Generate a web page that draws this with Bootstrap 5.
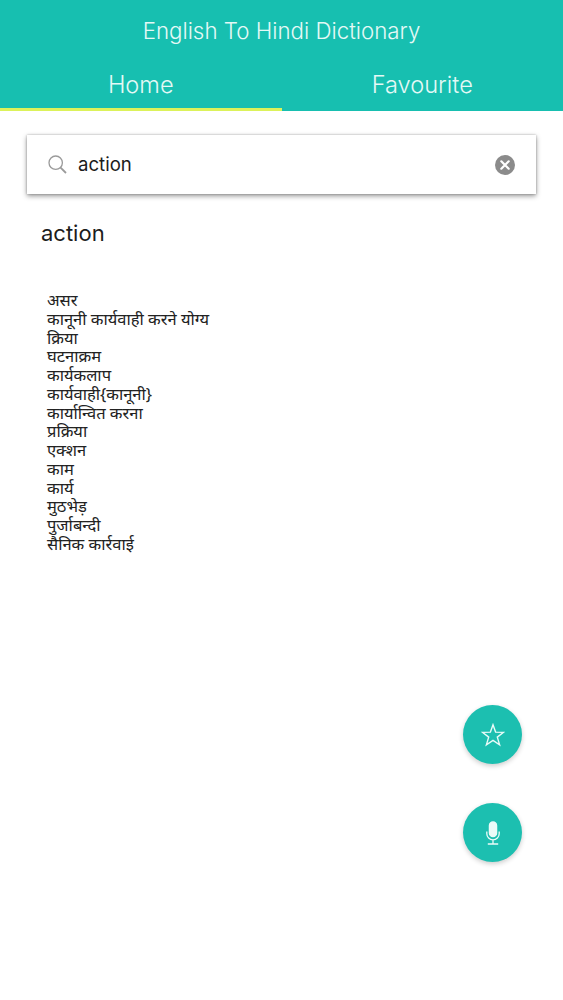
<!DOCTYPE html>
<html lang="hi">
<head>
<meta charset="utf-8">
<title>English To Hindi Dictionary</title>
<link href="https://cdn.jsdelivr.net/npm/bootstrap@5.3.0/dist/css/bootstrap.min.css" rel="stylesheet">
<style>
html,body{height:100%;}
body{background:#fff;color:#1c1c1c;font-family:"Inter","Liberation Sans","Noto Sans",sans-serif;overflow:hidden;}
.app-screen{position:relative;width:563px;height:1000px;}
.app-head{background:#17bfb0;color:#e4f9f6;height:111px;}
.app-title{font-size:22.3px;font-weight:300;line-height:28px;padding-top:17px;height:54px;}
.tab-item{flex:1 1 50%;height:57px;font-size:23.6px;font-weight:300;line-height:30px;padding:7px 0 0;color:#e4f9f6;background:none;border:0;border-bottom:3px solid transparent;}
.tab-item.is-on{border-bottom-color:#dcf25a;}
.search-bar{margin:24px 27px 0;height:59px;box-shadow:0 2px 5px rgba(0,0,0,.42),0 0 2px rgba(0,0,0,.25);padding:0 21px;}
.search-word{font-size:18.6px;line-height:24px;margin-left:11px;padding-bottom:2px;}
.word-head{font-size:22px;line-height:28px;margin:25px 0 0 41px;font-weight:400;}
.mean-list{margin:44px 0 0 47px;font-size:16.5px;line-height:18.75px;color:#222;font-family:"Noto Sans","Noto Sans Devanagari","Lohit Devanagari",sans-serif;}
.fab-btn{position:absolute;left:463px;width:59px;height:59px;border-radius:50%;background:#1cbfb0;box-shadow:0 2px 5px rgba(0,0,0,.2);border:0;padding:0;}
.fab-star{top:705px;}
.fab-mic{top:803px;}
</style>
</head>
<body>
<div class="app-screen">
  <header class="app-head">
    <div class="app-title text-center">English To Hindi Dictionary</div>
    <nav class="d-flex">
      <button class="tab-item is-on text-center" type="button">Home</button>
      <button class="tab-item text-center" type="button">Favourite</button>
    </nav>
  </header>
  <div class="search-bar d-flex align-items-center bg-white">
    <svg width="19" height="19" viewBox="0 0 19 19" fill="none" stroke="#9a9a9a" stroke-width="1.3"><circle cx="7.7" cy="7.7" r="6.7"/><path d="M12.6 12.6 18 18" stroke-width="1.8"/></svg>
    <span class="search-word flex-grow-1">action</span>
    <svg width="20" height="20" viewBox="0 0 20 20"><circle cx="10" cy="10" r="10" fill="#8b8b8b"/><path d="M6.3 6.3 13.7 13.7M13.7 6.3 6.3 13.7" stroke="#fff" stroke-width="2.2" stroke-linecap="round"/></svg>
  </div>
  <h2 class="word-head">action</h2>
  <div class="mean-list">
    <div>असर</div>
    <div>कानूनी कार्यवाही करने योग्य</div>
    <div>क्रिया</div>
    <div>घटनाक्रम</div>
    <div>कार्यकलाप</div>
    <div>कार्यवाही{कानूनी}</div>
    <div>कार्यान्वित करना</div>
    <div>प्रक्रिया</div>
    <div>एक्शन</div>
    <div>काम</div>
    <div>कार्य</div>
    <div>मुठभेड़</div>
    <div>पुर्जाबन्दी</div>
    <div>सैनिक कार्रवाई</div>
  </div>
  <button class="fab-btn fab-star d-flex align-items-center justify-content-center" type="button" aria-label="Favourite">
    <svg width="24" height="24" viewBox="0 0 24 24" fill="none" stroke="#e9fbf8" stroke-width="1.4" stroke-linejoin="miter"><path d="M12 1.8 14.6 9.1 22.6 9.3 16.3 14.1 18.6 21.8 12 17.3 5.4 21.8 7.7 14.1 1.4 9.3 9.4 9.1Z"/></svg>
  </button>
  <button class="fab-btn fab-mic d-flex align-items-center justify-content-center" type="button" aria-label="Voice search">
    <svg width="16" height="24" viewBox="0 0 16 24" fill="none" stroke="#eafbf8" stroke-width="1.3"><rect x="4.4" y="1" width="7.2" height="14.5" rx="3.6" fill="#eafbf8"/><path d="M1.8 10.5v2.2a6.2 6.2 0 0 0 12.4 0v-2.2M8 19v3.6M2.8 23h10.4"/></svg>
  </button>
</div>
<script src="https://cdn.jsdelivr.net/npm/bootstrap@5.3.0/dist/js/bootstrap.bundle.min.js"></script>
</body>
</html>
